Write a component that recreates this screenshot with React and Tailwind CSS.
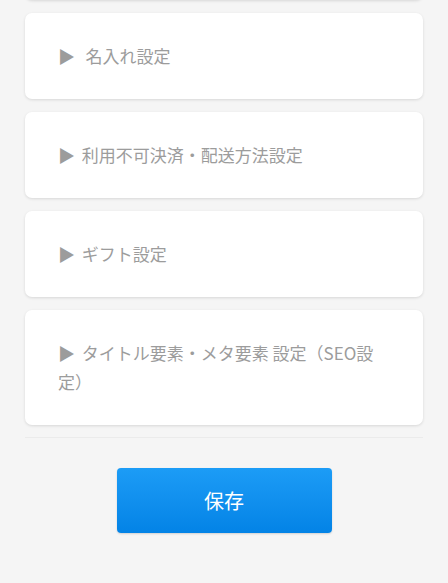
const sections = [
  { label: "名入れ設定", gap: "\u00a0\u00a0" },
  { label: "利用不可決済・配送方法設定", gap: " " },
  { label: "ギフト設定", gap: " " },
  { label: "タイトル要素・メタ要素 設定（SEO設定）", gap: " " },
];

function Section({ label, gap }) {
  return (
    <div className="rounded-[7px] bg-white pl-[33px] pr-[40px] pt-[28px] pb-[29px] shadow-[0_1px_3px_rgba(0,0,0,0.12)]">
      <p className="text-[17px] leading-[29px] text-[#9c9c9c]">
        <span className="mr-[3px] inline-block leading-[29px]">▶</span>
        {`${gap}${label}`}
      </p>
    </div>
  );
}

export default function App() {
  return (
    <div
      className="min-h-[583px] overflow-hidden bg-[#f5f5f5]"
      style={{ fontFamily: '"Noto Sans CJK JP", "Noto Sans", sans-serif' }}
    >
      <div className="mx-[25px] border-b border-[#ebebeb] pb-[12px]">
        <div className="-mt-[86px] flex flex-col gap-[13px]">
          <div className="h-[86px] rounded-[7px] bg-white shadow-[0_1px_3px_rgba(0,0,0,0.12)]" />
          {sections.map((s) => (
            <Section key={s.label} {...s} />
          ))}
        </div>
      </div>
      <div className="flex justify-center pt-[30px]">
        <button className="h-[65px] w-[215px] rounded-[4px] bg-gradient-to-b from-[#1c9cf6] to-[#0383e6] text-[20px] text-white shadow-[0_1px_2px_rgba(0,0,0,0.15)]">
          保存
        </button>
      </div>
    </div>
  );
}
